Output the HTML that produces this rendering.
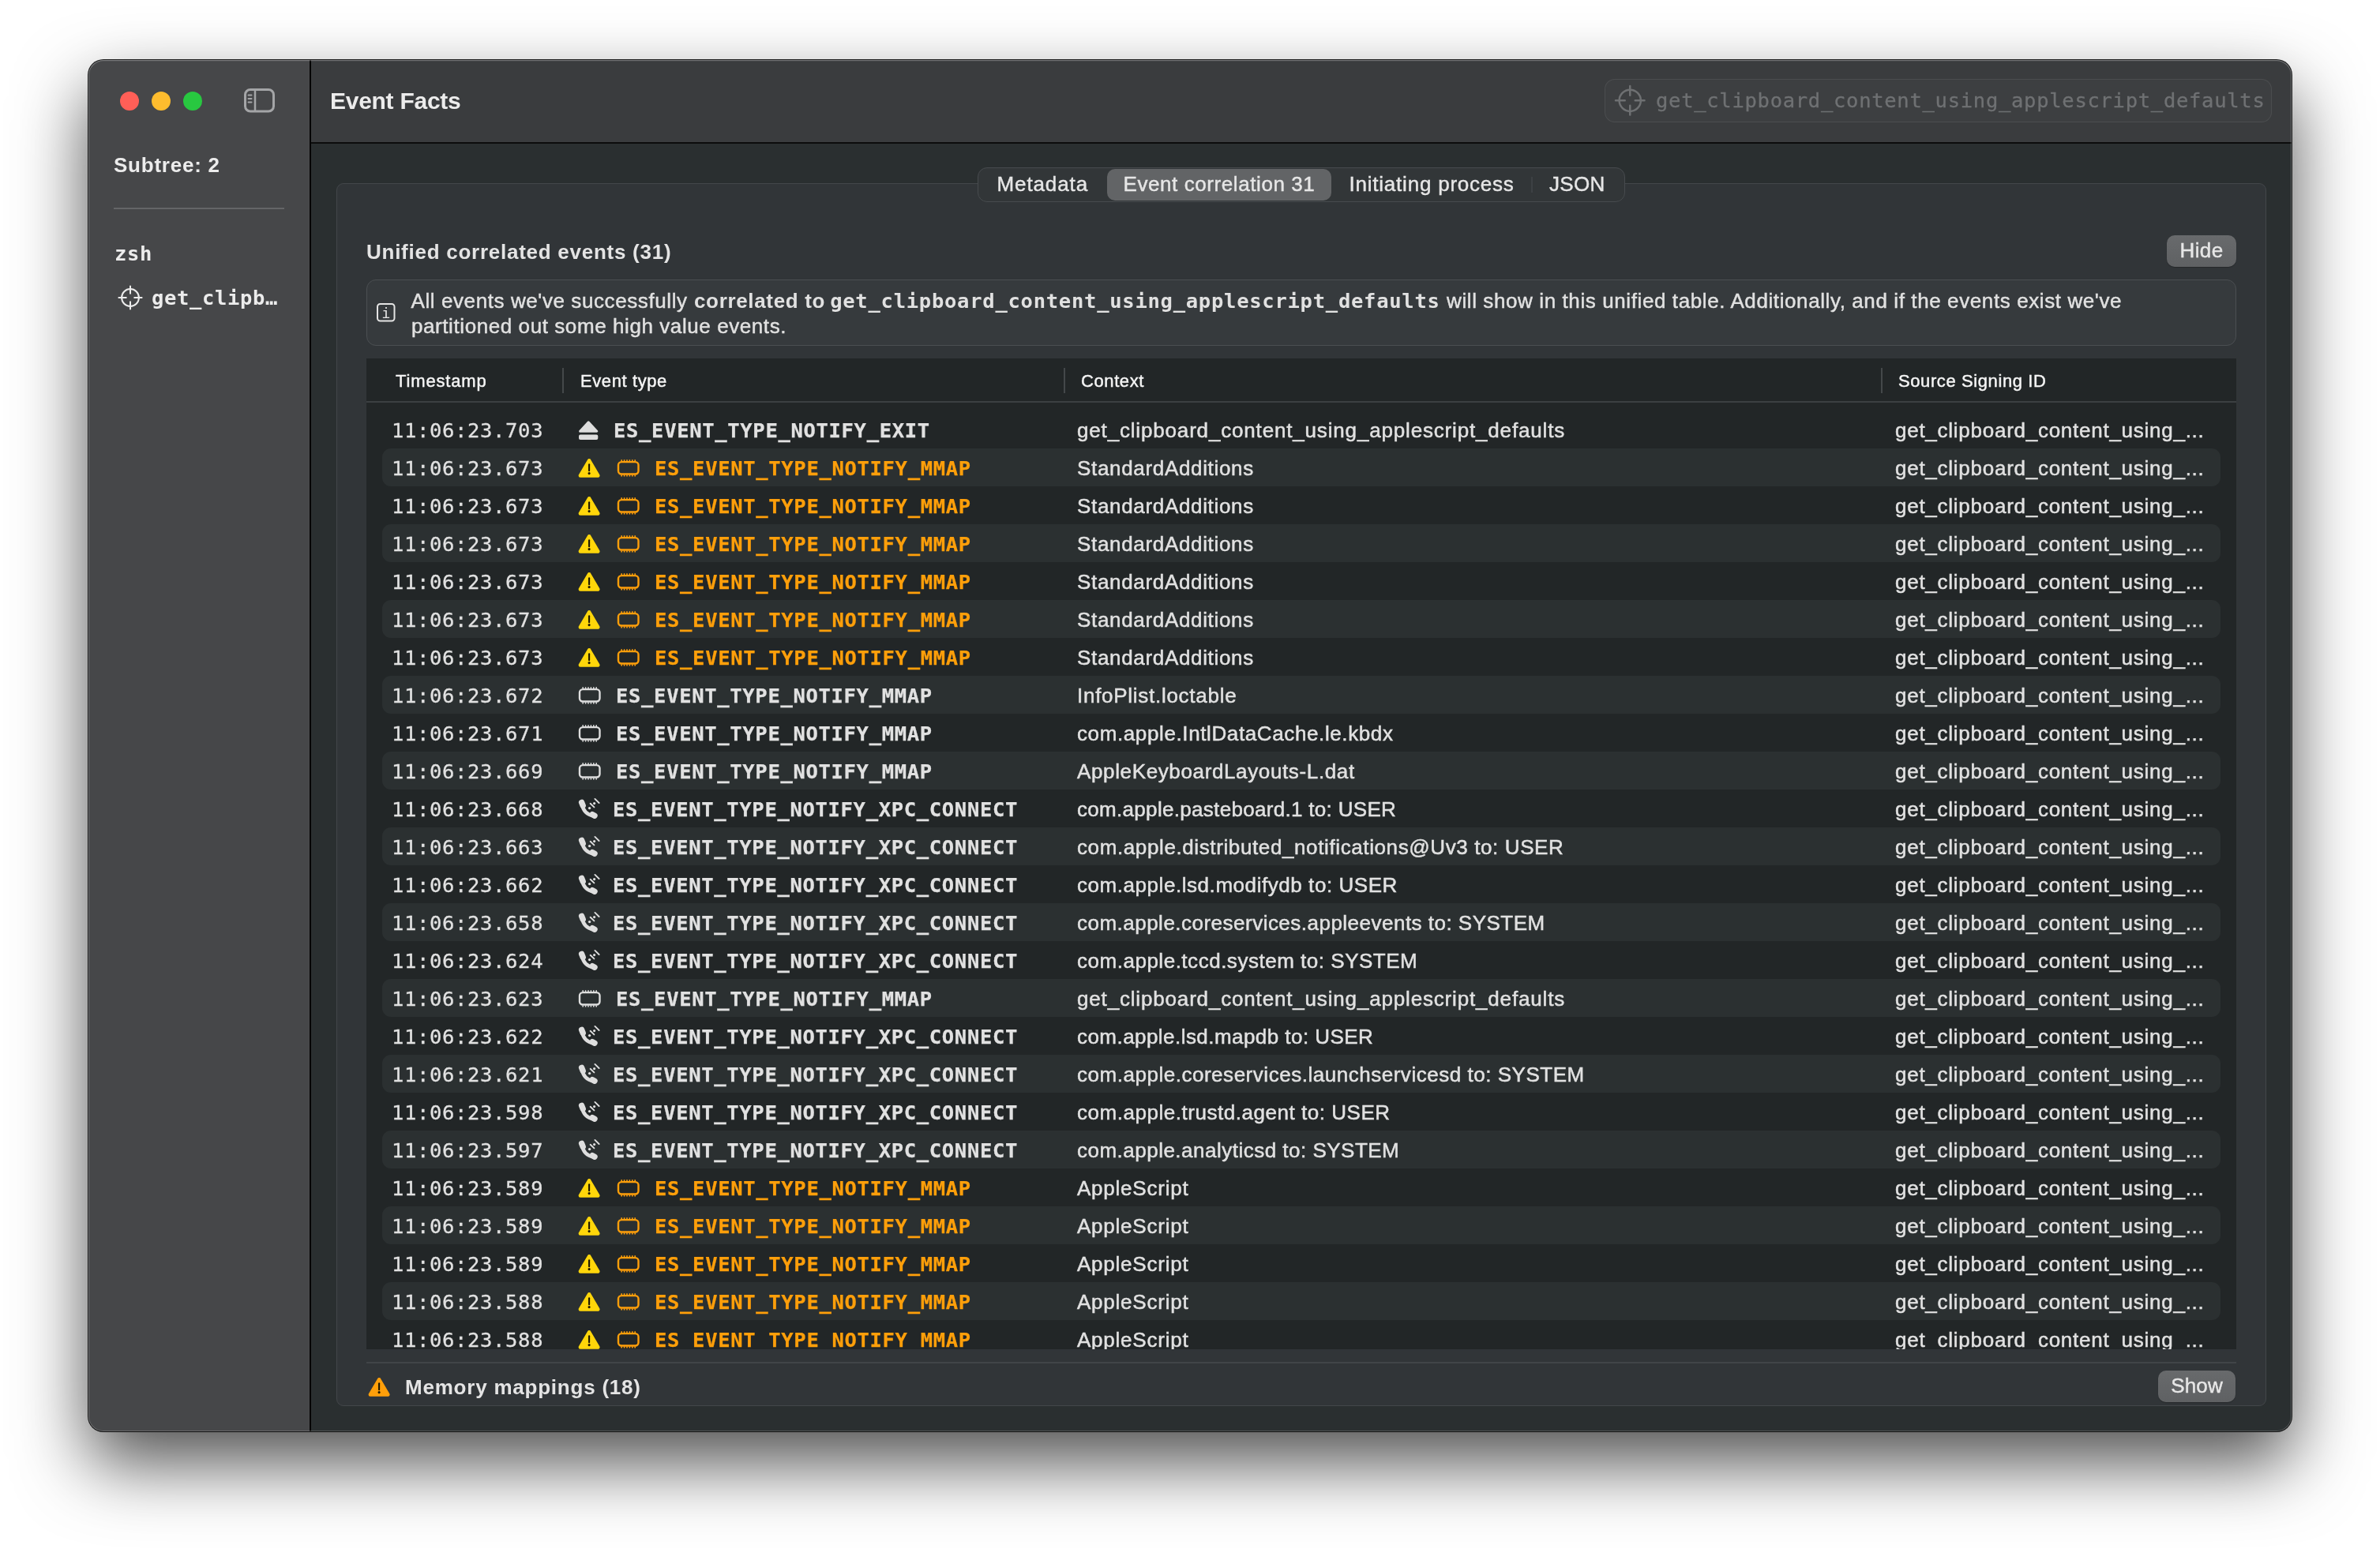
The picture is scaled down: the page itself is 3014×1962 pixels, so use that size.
<!DOCTYPE html>
<html lang="en"><head><meta charset="utf-8"><title>Event Facts</title>
<style>
html,body{margin:0;padding:0;background:#fff;}
body{width:3014px;height:1962px;overflow:hidden;position:relative;font-family:"Liberation Sans",sans-serif;}
#win{position:absolute;left:112px;top:76px;width:2790px;height:1737px;border-radius:19px;overflow:hidden;background:#2a2e30;
 box-shadow:0 0 0 1px rgba(0,0,0,.88),0 40px 90px rgba(0,0,0,.69);}
#win:after{content:"";position:absolute;inset:0;border-radius:19px;box-shadow:inset 0 0 0 1px rgba(255,255,255,.2),inset 0 1px 0 0.5px rgba(255,255,255,.12);pointer-events:none;}
#pg{position:absolute;left:-112px;top:-76px;width:3014px;height:1962px;will-change:transform;}
#pg>*, #seg>*, #table>*, .row>*, #thead>*, #info>*{position:absolute;}
#sidebar{left:111px;top:75px;width:281px;height:1739px;background:#464749;}
#toolbar{left:394px;top:75px;width:2509px;height:105px;background:#3a3c3e;}
#content{left:394px;top:182px;width:2509px;height:1632px;background:#2a2f30;}
#vdiv{left:392px;top:75px;width:2px;height:1739px;background:#050505;}
#hdiv{left:394px;top:180px;width:2509px;height:2px;background:#0c0c0c;}
.tl{top:116px;width:24px;height:24px;border-radius:50%;}
#sbicon{left:308px;top:110.5px;}
.t{white-space:nowrap;color:#e3e3e3;font-size:26px;line-height:32px;}
.b{font-weight:bold;}
.m{font-family:"DejaVu Sans Mono","Liberation Mono",monospace;letter-spacing:.66px;font-size:25.5px;}
#subtree{left:144px;top:193px;color:#ececec;letter-spacing:.77px;}
#sbline{left:144px;top:263px;width:216px;height:2px;background:#646567;}
#zsh{left:145px;top:305px;font-weight:bold;color:#ececec;}
#sbcross{left:147.5px;top:359.5px;color:#ececec;}
#getclip{left:192px;top:361px;font-weight:bold;color:#ececec;}
#title{left:418px;top:110px;font-size:30px;line-height:36px;color:#ececec;letter-spacing:-.27px;}
#tbitem{left:2032px;top:100px;width:845px;height:55px;box-sizing:border-box;border:1px solid rgba(255,255,255,.075);border-radius:13px;background:rgba(255,255,255,.02);}
#tbitem>*{position:absolute;}
#tbitem svg{left:10.4px;top:5px;width:42.5px;height:42.5px;color:#6e7072;}
#tbitem span{left:64px;top:10px;color:#6f7173;-webkit-text-stroke:.3px;letter-spacing:.72px;}
#group{left:426px;top:232px;width:2444px;height:1549px;box-sizing:border-box;border:1px solid #43474a;border-radius:9px;background:#313538;}
#seg{left:1238px;top:212px;width:820px;height:44px;box-sizing:border-box;border:1px solid #474b4e;border-radius:12px;background:#323638;}
#segsel{left:163px;top:1px;width:284px;height:40px;border-radius:10px;background:#626466;}
#seg .t{top:4px;color:#e6e6e6;}
#segsep{left:700px;top:11px;width:2px;height:20px;background:#3d4144;}
#h1{left:464px;top:303px;color:#e4e4e4;letter-spacing:.74px;}
.btn{box-sizing:border-box;height:40px;border-radius:10px;background:linear-gradient(#686a6c,#5f6163);text-align:center;line-height:38px;color:#e6e6e6;box-shadow:0 1px 1px rgba(0,0,0,.25);}
#hide{left:2744px;top:298px;width:88px;}
#show{left:2733px;top:1736px;width:98px;}
#info{left:464px;top:354px;width:2368px;height:84px;box-sizing:border-box;border:1px solid #4b4f52;border-radius:12px;background:#363a3d;}
#infoic{left:10.7px;top:28.4px;}
.it{top:10px;color:#e1e1e1;}
#ia{left:55.5px;}#ib{left:414px;}#ic{left:587px;}#id{left:1367px;}#ie{left:56px;top:42px;}
#table{left:464px;top:454px;width:2368px;height:1255px;background:#222627;overflow:hidden;}
#thead{left:0;top:0;width:2368px;height:54px;border-bottom:2px solid #3c4042;}
.th{top:15px;-webkit-text-stroke:.45px;letter-spacing:.6px;font-size:22px;line-height:28px;color:#f5f5f5;white-space:nowrap;}
.sep{top:12px;width:2px;height:32px;background:#44484a;}
.row{left:20px;width:2328px;height:48px;border-radius:11px;}
.row.alt{background:#2b3031;}
.row span{top:1px;line-height:48px;font-size:26px;white-space:nowrap;color:#e1e1e1;}
.row span.ts{left:12px;font-family:"DejaVu Sans Mono","Liberation Mono",monospace;letter-spacing:.66px;font-size:25.5px;-webkit-text-stroke:.3px;}
.row span.ev{-webkit-text-stroke:.25px;font-family:"DejaVu Sans Mono","Liberation Mono",monospace;letter-spacing:.68px;font-weight:bold;font-size:25.5px;}
.row span.o,.o{color:#ff9f0a;}
.cx{left:880px;letter-spacing:.6px;-webkit-text-stroke:.5px;}
.sg{left:1916px;letter-spacing:.74px;-webkit-text-stroke:.5px;}
.ic{overflow:visible;}
.i-eject{left:248px;top:12px;width:26px;height:26px;color:#dedede;}
.i-chip{left:247.6px;top:13px;width:30px;height:24px;color:#dedede;}
.i-chip.o{color:#ff9f0a;}
.i-phone{left:248px;top:11px;width:28px;height:28px;color:#dedede;}
.i-warn{left:246.7px;top:11px;width:30px;height:28px;color:#ffd60a;}
#botline{left:464px;top:1725px;width:2368px;height:2px;background:#414548;}
#botwarn{left:465px;top:1743px;}
#mm{left:513px;top:1741px;color:#e4e4e4;letter-spacing:.78px;}
#s1{letter-spacing:.89px;}#s2{letter-spacing:.58px;}#s3{letter-spacing:.78px;}#s4{letter-spacing:.3px;}
#hide{letter-spacing:.4px;}#show{letter-spacing:.15px;}
#ia{letter-spacing:.59px;}#ib{letter-spacing:.66px;}#id{letter-spacing:.6px;}#ie{letter-spacing:.58px;}
#seg .t,.btn,.it{-webkit-text-stroke:.45px;}
#ib,#ic{-webkit-text-stroke:0;}
#ic{letter-spacing:.74px;left:586.2px;}

</style></head>
<body>
<div id="win"><div id="pg">
<div id="sidebar"></div>
<div id="toolbar"></div>
<div id="content"></div>
<div id="vdiv"></div><div id="hdiv"></div>

<div class="tl" style="left:152px;background:#ff5f57"></div>
<div class="tl" style="left:192px;background:#febc2e"></div>
<div class="tl" style="left:232px;background:#28c840"></div>
<svg id="sbicon" width="42" height="34" viewBox="0 0 42 34"><rect x="2.5" y="2.5" width="36" height="27.5" rx="6.5" fill="none" stroke="#a4a5a7" stroke-width="3"/><line x1="15" y1="3" x2="15" y2="29.5" stroke="#a4a5a7" stroke-width="2.5"/><g stroke="#a4a5a7" stroke-width="2" stroke-linecap="round"><line x1="6.5" y1="9.6" x2="10.5" y2="9.6"/><line x1="6.5" y1="14.1" x2="10.5" y2="14.1"/><line x1="6.5" y1="18.6" x2="10.5" y2="18.6"/></g></svg>

<div id="subtree" class="t b">Subtree: 2</div>
<div id="sbline"></div>
<div id="zsh" class="t m">zsh</div>
<svg id="sbcross" class="cross" width="34" height="34" viewBox="0 0 34 34"><g fill="none" stroke="currentColor" stroke-width="2" stroke-linecap="round"><circle cx="17" cy="17" r="10.9"/><path d="M17 2.4v9.4M17 22.2v9.4M2.4 17h9.4M22.2 17h9.4"/></g></svg>
<div id="getclip" class="t m">get_clipb…</div>

<div id="title" class="t b">Event Facts</div>
<div id="tbitem"><svg class="cross" width="34" height="34" viewBox="0 0 34 34"><g fill="none" stroke="currentColor" stroke-width="2" stroke-linecap="round"><circle cx="17" cy="17" r="10.9"/><path d="M17 2.4v9.4M17 22.2v9.4M2.4 17h9.4M22.2 17h9.4"/></g></svg><span class="t m">get_clipboard_content_using_applescript_defaults</span></div>

<div id="group"></div>
<div id="seg">
 <div id="segsel"></div>
 <span class="t" style="left:23.5px" id="s1">Metadata</span>
 <span class="t" style="left:183.5px" id="s2">Event correlation 31</span>
 <span class="t" style="left:469.5px" id="s3">Initiating process</span>
 <i id="segsep"></i>
 <span class="t" style="left:723px" id="s4">JSON</span>
</div>

<div id="h1" class="t b">Unified correlated events (31)</div>
<div id="hide" class="btn t">Hide</div>
<div id="info">
 <svg id="infoic" width="28" height="28" viewBox="0 0 28 28"><rect x="2" y="2" width="21.5" height="21.5" rx="3.5" fill="none" stroke="#e4e4e4" stroke-width="2"/><text x="12.75" y="20.1" text-anchor="middle" font-family="DejaVu Sans Mono,Liberation Mono,monospace" font-size="18.5" fill="#e4e4e4">i</text></svg>
 <span id="ia" class="t it">All events we've successfully</span>
 <span id="ib" class="t it b">correlated to</span>
 <span id="ic" class="t it b m">get_clipboard_content_using_applescript_defaults</span>
 <span id="id" class="t it">will show in this unified table. Additionally, and if the events exist we've</span>
 <span id="ie" class="t it">partitioned out some high value events.</span>
</div>

<div id="table">
 <div id="thead">
  <span class="th" style="left:37px;letter-spacing:.85px">Timestamp</span><i class="sep" style="left:248px"></i>
  <span class="th" style="left:271px">Event type</span><i class="sep" style="left:883px"></i>
  <span class="th" style="left:905px">Context</span><i class="sep" style="left:1918px"></i>
  <span class="th" style="left:1940px">Source Signing ID</span>
 </div>
<div class="row" style="top:66px"><span class="ts">11:06:23.703</span><svg class="ic i-eject" viewBox="0 0 26 26"><path d="M13.2 2.9 23.8 14.2H2.6Z" fill="currentColor" stroke="currentColor" stroke-width="3" stroke-linejoin="round"/><rect x="1" y="18.6" width="24.3" height="6.4" rx="2" fill="currentColor"/></svg><span class="ev" style="left:293px">ES_EVENT_TYPE_NOTIFY_EXIT</span><span class="cx" style="letter-spacing:0.83px">get_clipboard_content_using_applescript_defaults</span><span class="sg">get_clipboard_content_using_...</span></div>
<div class="row alt" style="top:114px"><span class="ts">11:06:23.673</span><svg class="ic i-warn" viewBox="0 0 30 28"><path d="M15.1 4.3 26.3 23.5H3.9Z" fill="currentColor" stroke="currentColor" stroke-width="4.6" stroke-linejoin="round"/><path d="M15.1 9.3v7.9" stroke="#1c1600" stroke-width="2.1" stroke-linecap="round" fill="none"/><circle cx="15.1" cy="20.6" r="1.55" fill="#1c1600"/></svg><svg class="ic i-chip o" viewBox="0 0 30 24" style="left:297px"><rect x="2" y="4.1" width="25.5" height="15.4" rx="4" fill="none" stroke="currentColor" stroke-width="2.4"/><path d="M6.2 1.2v2M9.6 1.2v2M13 1.2v2M16.4 1.2v2M19.8 1.2v2M23.2 1.2v2M6.2 20.4v2.2M9.6 20.4v2.2M13 20.4v2.2M16.4 20.4v2.2M19.8 20.4v2.2M23.2 20.4v2.2" stroke="currentColor" stroke-width="1.6" fill="none"/></svg><span class="ev o" style="left:345px">ES_EVENT_TYPE_NOTIFY_MMAP</span><span class="cx" style="letter-spacing:0.669px">StandardAdditions</span><span class="sg">get_clipboard_content_using_...</span></div>
<div class="row" style="top:162px"><span class="ts">11:06:23.673</span><svg class="ic i-warn" viewBox="0 0 30 28"><path d="M15.1 4.3 26.3 23.5H3.9Z" fill="currentColor" stroke="currentColor" stroke-width="4.6" stroke-linejoin="round"/><path d="M15.1 9.3v7.9" stroke="#1c1600" stroke-width="2.1" stroke-linecap="round" fill="none"/><circle cx="15.1" cy="20.6" r="1.55" fill="#1c1600"/></svg><svg class="ic i-chip o" viewBox="0 0 30 24" style="left:297px"><rect x="2" y="4.1" width="25.5" height="15.4" rx="4" fill="none" stroke="currentColor" stroke-width="2.4"/><path d="M6.2 1.2v2M9.6 1.2v2M13 1.2v2M16.4 1.2v2M19.8 1.2v2M23.2 1.2v2M6.2 20.4v2.2M9.6 20.4v2.2M13 20.4v2.2M16.4 20.4v2.2M19.8 20.4v2.2M23.2 20.4v2.2" stroke="currentColor" stroke-width="1.6" fill="none"/></svg><span class="ev o" style="left:345px">ES_EVENT_TYPE_NOTIFY_MMAP</span><span class="cx" style="letter-spacing:0.669px">StandardAdditions</span><span class="sg">get_clipboard_content_using_...</span></div>
<div class="row alt" style="top:210px"><span class="ts">11:06:23.673</span><svg class="ic i-warn" viewBox="0 0 30 28"><path d="M15.1 4.3 26.3 23.5H3.9Z" fill="currentColor" stroke="currentColor" stroke-width="4.6" stroke-linejoin="round"/><path d="M15.1 9.3v7.9" stroke="#1c1600" stroke-width="2.1" stroke-linecap="round" fill="none"/><circle cx="15.1" cy="20.6" r="1.55" fill="#1c1600"/></svg><svg class="ic i-chip o" viewBox="0 0 30 24" style="left:297px"><rect x="2" y="4.1" width="25.5" height="15.4" rx="4" fill="none" stroke="currentColor" stroke-width="2.4"/><path d="M6.2 1.2v2M9.6 1.2v2M13 1.2v2M16.4 1.2v2M19.8 1.2v2M23.2 1.2v2M6.2 20.4v2.2M9.6 20.4v2.2M13 20.4v2.2M16.4 20.4v2.2M19.8 20.4v2.2M23.2 20.4v2.2" stroke="currentColor" stroke-width="1.6" fill="none"/></svg><span class="ev o" style="left:345px">ES_EVENT_TYPE_NOTIFY_MMAP</span><span class="cx" style="letter-spacing:0.669px">StandardAdditions</span><span class="sg">get_clipboard_content_using_...</span></div>
<div class="row" style="top:258px"><span class="ts">11:06:23.673</span><svg class="ic i-warn" viewBox="0 0 30 28"><path d="M15.1 4.3 26.3 23.5H3.9Z" fill="currentColor" stroke="currentColor" stroke-width="4.6" stroke-linejoin="round"/><path d="M15.1 9.3v7.9" stroke="#1c1600" stroke-width="2.1" stroke-linecap="round" fill="none"/><circle cx="15.1" cy="20.6" r="1.55" fill="#1c1600"/></svg><svg class="ic i-chip o" viewBox="0 0 30 24" style="left:297px"><rect x="2" y="4.1" width="25.5" height="15.4" rx="4" fill="none" stroke="currentColor" stroke-width="2.4"/><path d="M6.2 1.2v2M9.6 1.2v2M13 1.2v2M16.4 1.2v2M19.8 1.2v2M23.2 1.2v2M6.2 20.4v2.2M9.6 20.4v2.2M13 20.4v2.2M16.4 20.4v2.2M19.8 20.4v2.2M23.2 20.4v2.2" stroke="currentColor" stroke-width="1.6" fill="none"/></svg><span class="ev o" style="left:345px">ES_EVENT_TYPE_NOTIFY_MMAP</span><span class="cx" style="letter-spacing:0.669px">StandardAdditions</span><span class="sg">get_clipboard_content_using_...</span></div>
<div class="row alt" style="top:306px"><span class="ts">11:06:23.673</span><svg class="ic i-warn" viewBox="0 0 30 28"><path d="M15.1 4.3 26.3 23.5H3.9Z" fill="currentColor" stroke="currentColor" stroke-width="4.6" stroke-linejoin="round"/><path d="M15.1 9.3v7.9" stroke="#1c1600" stroke-width="2.1" stroke-linecap="round" fill="none"/><circle cx="15.1" cy="20.6" r="1.55" fill="#1c1600"/></svg><svg class="ic i-chip o" viewBox="0 0 30 24" style="left:297px"><rect x="2" y="4.1" width="25.5" height="15.4" rx="4" fill="none" stroke="currentColor" stroke-width="2.4"/><path d="M6.2 1.2v2M9.6 1.2v2M13 1.2v2M16.4 1.2v2M19.8 1.2v2M23.2 1.2v2M6.2 20.4v2.2M9.6 20.4v2.2M13 20.4v2.2M16.4 20.4v2.2M19.8 20.4v2.2M23.2 20.4v2.2" stroke="currentColor" stroke-width="1.6" fill="none"/></svg><span class="ev o" style="left:345px">ES_EVENT_TYPE_NOTIFY_MMAP</span><span class="cx" style="letter-spacing:0.669px">StandardAdditions</span><span class="sg">get_clipboard_content_using_...</span></div>
<div class="row" style="top:354px"><span class="ts">11:06:23.673</span><svg class="ic i-warn" viewBox="0 0 30 28"><path d="M15.1 4.3 26.3 23.5H3.9Z" fill="currentColor" stroke="currentColor" stroke-width="4.6" stroke-linejoin="round"/><path d="M15.1 9.3v7.9" stroke="#1c1600" stroke-width="2.1" stroke-linecap="round" fill="none"/><circle cx="15.1" cy="20.6" r="1.55" fill="#1c1600"/></svg><svg class="ic i-chip o" viewBox="0 0 30 24" style="left:297px"><rect x="2" y="4.1" width="25.5" height="15.4" rx="4" fill="none" stroke="currentColor" stroke-width="2.4"/><path d="M6.2 1.2v2M9.6 1.2v2M13 1.2v2M16.4 1.2v2M19.8 1.2v2M23.2 1.2v2M6.2 20.4v2.2M9.6 20.4v2.2M13 20.4v2.2M16.4 20.4v2.2M19.8 20.4v2.2M23.2 20.4v2.2" stroke="currentColor" stroke-width="1.6" fill="none"/></svg><span class="ev o" style="left:345px">ES_EVENT_TYPE_NOTIFY_MMAP</span><span class="cx" style="letter-spacing:0.669px">StandardAdditions</span><span class="sg">get_clipboard_content_using_...</span></div>
<div class="row alt" style="top:402px"><span class="ts">11:06:23.672</span><svg class="ic i-chip" viewBox="0 0 30 24"><rect x="2" y="4.1" width="25.5" height="15.4" rx="4" fill="none" stroke="currentColor" stroke-width="2.4"/><path d="M6.2 1.2v2M9.6 1.2v2M13 1.2v2M16.4 1.2v2M19.8 1.2v2M23.2 1.2v2M6.2 20.4v2.2M9.6 20.4v2.2M13 20.4v2.2M16.4 20.4v2.2M19.8 20.4v2.2M23.2 20.4v2.2" stroke="currentColor" stroke-width="1.6" fill="none"/></svg><span class="ev" style="left:296px">ES_EVENT_TYPE_NOTIFY_MMAP</span><span class="cx" style="letter-spacing:0.723px">InfoPlist.loctable</span><span class="sg">get_clipboard_content_using_...</span></div>
<div class="row" style="top:450px"><span class="ts">11:06:23.671</span><svg class="ic i-chip" viewBox="0 0 30 24"><rect x="2" y="4.1" width="25.5" height="15.4" rx="4" fill="none" stroke="currentColor" stroke-width="2.4"/><path d="M6.2 1.2v2M9.6 1.2v2M13 1.2v2M16.4 1.2v2M19.8 1.2v2M23.2 1.2v2M6.2 20.4v2.2M9.6 20.4v2.2M13 20.4v2.2M16.4 20.4v2.2M19.8 20.4v2.2M23.2 20.4v2.2" stroke="currentColor" stroke-width="1.6" fill="none"/></svg><span class="ev" style="left:296px">ES_EVENT_TYPE_NOTIFY_MMAP</span><span class="cx" style="letter-spacing:0.613px">com.apple.IntlDataCache.le.kbdx</span><span class="sg">get_clipboard_content_using_...</span></div>
<div class="row alt" style="top:498px"><span class="ts">11:06:23.669</span><svg class="ic i-chip" viewBox="0 0 30 24"><rect x="2" y="4.1" width="25.5" height="15.4" rx="4" fill="none" stroke="currentColor" stroke-width="2.4"/><path d="M6.2 1.2v2M9.6 1.2v2M13 1.2v2M16.4 1.2v2M19.8 1.2v2M23.2 1.2v2M6.2 20.4v2.2M9.6 20.4v2.2M13 20.4v2.2M16.4 20.4v2.2M19.8 20.4v2.2M23.2 20.4v2.2" stroke="currentColor" stroke-width="1.6" fill="none"/></svg><span class="ev" style="left:296px">ES_EVENT_TYPE_NOTIFY_MMAP</span><span class="cx" style="letter-spacing:0.632px">AppleKeyboardLayouts-L.dat</span><span class="sg">get_clipboard_content_using_...</span></div>
<div class="row" style="top:546px"><span class="ts">11:06:23.668</span><svg class="ic i-phone" viewBox="0 0 28 28"><g fill="none" stroke="currentColor" stroke-linecap="round"><path d="M5 7.5Q7 20 19.5 22.5" stroke-width="4.6"/><path d="M4.6 5.4 6.2 9.4" stroke-width="7.4"/><path d="M18.2 20.6 21 22.2" stroke-width="7.4"/><path d="M15.6 6.8 20.4 11.4M21.4 .9 26.6 6" stroke-width="1.9"/></g><circle cx="14.6" cy="12.6" r="1.7" fill="currentColor"/><circle cx="20.6" cy="6.6" r="1.6" fill="currentColor"/></svg><span class="ev" style="left:292px">ES_EVENT_TYPE_NOTIFY_XPC_CONNECT</span><span class="cx" style="letter-spacing:0.309px">com.apple.pasteboard.1 to: USER</span><span class="sg">get_clipboard_content_using_...</span></div>
<div class="row alt" style="top:594px"><span class="ts">11:06:23.663</span><svg class="ic i-phone" viewBox="0 0 28 28"><g fill="none" stroke="currentColor" stroke-linecap="round"><path d="M5 7.5Q7 20 19.5 22.5" stroke-width="4.6"/><path d="M4.6 5.4 6.2 9.4" stroke-width="7.4"/><path d="M18.2 20.6 21 22.2" stroke-width="7.4"/><path d="M15.6 6.8 20.4 11.4M21.4 .9 26.6 6" stroke-width="1.9"/></g><circle cx="14.6" cy="12.6" r="1.7" fill="currentColor"/><circle cx="20.6" cy="6.6" r="1.6" fill="currentColor"/></svg><span class="ev" style="left:292px">ES_EVENT_TYPE_NOTIFY_XPC_CONNECT</span><span class="cx" style="letter-spacing:0.611px">com.apple.distributed_notifications@Uv3 to: USER</span><span class="sg">get_clipboard_content_using_...</span></div>
<div class="row" style="top:642px"><span class="ts">11:06:23.662</span><svg class="ic i-phone" viewBox="0 0 28 28"><g fill="none" stroke="currentColor" stroke-linecap="round"><path d="M5 7.5Q7 20 19.5 22.5" stroke-width="4.6"/><path d="M4.6 5.4 6.2 9.4" stroke-width="7.4"/><path d="M18.2 20.6 21 22.2" stroke-width="7.4"/><path d="M15.6 6.8 20.4 11.4M21.4 .9 26.6 6" stroke-width="1.9"/></g><circle cx="14.6" cy="12.6" r="1.7" fill="currentColor"/><circle cx="20.6" cy="6.6" r="1.6" fill="currentColor"/></svg><span class="ev" style="left:292px">ES_EVENT_TYPE_NOTIFY_XPC_CONNECT</span><span class="cx" style="letter-spacing:0.554px">com.apple.lsd.modifydb to: USER</span><span class="sg">get_clipboard_content_using_...</span></div>
<div class="row alt" style="top:690px"><span class="ts">11:06:23.658</span><svg class="ic i-phone" viewBox="0 0 28 28"><g fill="none" stroke="currentColor" stroke-linecap="round"><path d="M5 7.5Q7 20 19.5 22.5" stroke-width="4.6"/><path d="M4.6 5.4 6.2 9.4" stroke-width="7.4"/><path d="M18.2 20.6 21 22.2" stroke-width="7.4"/><path d="M15.6 6.8 20.4 11.4M21.4 .9 26.6 6" stroke-width="1.9"/></g><circle cx="14.6" cy="12.6" r="1.7" fill="currentColor"/><circle cx="20.6" cy="6.6" r="1.6" fill="currentColor"/></svg><span class="ev" style="left:292px">ES_EVENT_TYPE_NOTIFY_XPC_CONNECT</span><span class="cx" style="letter-spacing:0.486px">com.apple.coreservices.appleevents to: SYSTEM</span><span class="sg">get_clipboard_content_using_...</span></div>
<div class="row" style="top:738px"><span class="ts">11:06:23.624</span><svg class="ic i-phone" viewBox="0 0 28 28"><g fill="none" stroke="currentColor" stroke-linecap="round"><path d="M5 7.5Q7 20 19.5 22.5" stroke-width="4.6"/><path d="M4.6 5.4 6.2 9.4" stroke-width="7.4"/><path d="M18.2 20.6 21 22.2" stroke-width="7.4"/><path d="M15.6 6.8 20.4 11.4M21.4 .9 26.6 6" stroke-width="1.9"/></g><circle cx="14.6" cy="12.6" r="1.7" fill="currentColor"/><circle cx="20.6" cy="6.6" r="1.6" fill="currentColor"/></svg><span class="ev" style="left:292px">ES_EVENT_TYPE_NOTIFY_XPC_CONNECT</span><span class="cx" style="letter-spacing:0.519px">com.apple.tccd.system to: SYSTEM</span><span class="sg">get_clipboard_content_using_...</span></div>
<div class="row alt" style="top:786px"><span class="ts">11:06:23.623</span><svg class="ic i-chip" viewBox="0 0 30 24"><rect x="2" y="4.1" width="25.5" height="15.4" rx="4" fill="none" stroke="currentColor" stroke-width="2.4"/><path d="M6.2 1.2v2M9.6 1.2v2M13 1.2v2M16.4 1.2v2M19.8 1.2v2M23.2 1.2v2M6.2 20.4v2.2M9.6 20.4v2.2M13 20.4v2.2M16.4 20.4v2.2M19.8 20.4v2.2M23.2 20.4v2.2" stroke="currentColor" stroke-width="1.6" fill="none"/></svg><span class="ev" style="left:296px">ES_EVENT_TYPE_NOTIFY_MMAP</span><span class="cx" style="letter-spacing:0.83px">get_clipboard_content_using_applescript_defaults</span><span class="sg">get_clipboard_content_using_...</span></div>
<div class="row" style="top:834px"><span class="ts">11:06:23.622</span><svg class="ic i-phone" viewBox="0 0 28 28"><g fill="none" stroke="currentColor" stroke-linecap="round"><path d="M5 7.5Q7 20 19.5 22.5" stroke-width="4.6"/><path d="M4.6 5.4 6.2 9.4" stroke-width="7.4"/><path d="M18.2 20.6 21 22.2" stroke-width="7.4"/><path d="M15.6 6.8 20.4 11.4M21.4 .9 26.6 6" stroke-width="1.9"/></g><circle cx="14.6" cy="12.6" r="1.7" fill="currentColor"/><circle cx="20.6" cy="6.6" r="1.6" fill="currentColor"/></svg><span class="ev" style="left:292px">ES_EVENT_TYPE_NOTIFY_XPC_CONNECT</span><span class="cx" style="letter-spacing:0.448px">com.apple.lsd.mapdb to: USER</span><span class="sg">get_clipboard_content_using_...</span></div>
<div class="row alt" style="top:882px"><span class="ts">11:06:23.621</span><svg class="ic i-phone" viewBox="0 0 28 28"><g fill="none" stroke="currentColor" stroke-linecap="round"><path d="M5 7.5Q7 20 19.5 22.5" stroke-width="4.6"/><path d="M4.6 5.4 6.2 9.4" stroke-width="7.4"/><path d="M18.2 20.6 21 22.2" stroke-width="7.4"/><path d="M15.6 6.8 20.4 11.4M21.4 .9 26.6 6" stroke-width="1.9"/></g><circle cx="14.6" cy="12.6" r="1.7" fill="currentColor"/><circle cx="20.6" cy="6.6" r="1.6" fill="currentColor"/></svg><span class="ev" style="left:292px">ES_EVENT_TYPE_NOTIFY_XPC_CONNECT</span><span class="cx" style="letter-spacing:0.525px">com.apple.coreservices.launchservicesd to: SYSTEM</span><span class="sg">get_clipboard_content_using_...</span></div>
<div class="row" style="top:930px"><span class="ts">11:06:23.598</span><svg class="ic i-phone" viewBox="0 0 28 28"><g fill="none" stroke="currentColor" stroke-linecap="round"><path d="M5 7.5Q7 20 19.5 22.5" stroke-width="4.6"/><path d="M4.6 5.4 6.2 9.4" stroke-width="7.4"/><path d="M18.2 20.6 21 22.2" stroke-width="7.4"/><path d="M15.6 6.8 20.4 11.4M21.4 .9 26.6 6" stroke-width="1.9"/></g><circle cx="14.6" cy="12.6" r="1.7" fill="currentColor"/><circle cx="20.6" cy="6.6" r="1.6" fill="currentColor"/></svg><span class="ev" style="left:292px">ES_EVENT_TYPE_NOTIFY_XPC_CONNECT</span><span class="cx" style="letter-spacing:0.533px">com.apple.trustd.agent to: USER</span><span class="sg">get_clipboard_content_using_...</span></div>
<div class="row alt" style="top:978px"><span class="ts">11:06:23.597</span><svg class="ic i-phone" viewBox="0 0 28 28"><g fill="none" stroke="currentColor" stroke-linecap="round"><path d="M5 7.5Q7 20 19.5 22.5" stroke-width="4.6"/><path d="M4.6 5.4 6.2 9.4" stroke-width="7.4"/><path d="M18.2 20.6 21 22.2" stroke-width="7.4"/><path d="M15.6 6.8 20.4 11.4M21.4 .9 26.6 6" stroke-width="1.9"/></g><circle cx="14.6" cy="12.6" r="1.7" fill="currentColor"/><circle cx="20.6" cy="6.6" r="1.6" fill="currentColor"/></svg><span class="ev" style="left:292px">ES_EVENT_TYPE_NOTIFY_XPC_CONNECT</span><span class="cx" style="letter-spacing:0.49px">com.apple.analyticsd to: SYSTEM</span><span class="sg">get_clipboard_content_using_...</span></div>
<div class="row" style="top:1026px"><span class="ts">11:06:23.589</span><svg class="ic i-warn" viewBox="0 0 30 28"><path d="M15.1 4.3 26.3 23.5H3.9Z" fill="currentColor" stroke="currentColor" stroke-width="4.6" stroke-linejoin="round"/><path d="M15.1 9.3v7.9" stroke="#1c1600" stroke-width="2.1" stroke-linecap="round" fill="none"/><circle cx="15.1" cy="20.6" r="1.55" fill="#1c1600"/></svg><svg class="ic i-chip o" viewBox="0 0 30 24" style="left:297px"><rect x="2" y="4.1" width="25.5" height="15.4" rx="4" fill="none" stroke="currentColor" stroke-width="2.4"/><path d="M6.2 1.2v2M9.6 1.2v2M13 1.2v2M16.4 1.2v2M19.8 1.2v2M23.2 1.2v2M6.2 20.4v2.2M9.6 20.4v2.2M13 20.4v2.2M16.4 20.4v2.2M19.8 20.4v2.2M23.2 20.4v2.2" stroke="currentColor" stroke-width="1.6" fill="none"/></svg><span class="ev o" style="left:345px">ES_EVENT_TYPE_NOTIFY_MMAP</span><span class="cx" style="letter-spacing:0.77px">AppleScript</span><span class="sg">get_clipboard_content_using_...</span></div>
<div class="row alt" style="top:1074px"><span class="ts">11:06:23.589</span><svg class="ic i-warn" viewBox="0 0 30 28"><path d="M15.1 4.3 26.3 23.5H3.9Z" fill="currentColor" stroke="currentColor" stroke-width="4.6" stroke-linejoin="round"/><path d="M15.1 9.3v7.9" stroke="#1c1600" stroke-width="2.1" stroke-linecap="round" fill="none"/><circle cx="15.1" cy="20.6" r="1.55" fill="#1c1600"/></svg><svg class="ic i-chip o" viewBox="0 0 30 24" style="left:297px"><rect x="2" y="4.1" width="25.5" height="15.4" rx="4" fill="none" stroke="currentColor" stroke-width="2.4"/><path d="M6.2 1.2v2M9.6 1.2v2M13 1.2v2M16.4 1.2v2M19.8 1.2v2M23.2 1.2v2M6.2 20.4v2.2M9.6 20.4v2.2M13 20.4v2.2M16.4 20.4v2.2M19.8 20.4v2.2M23.2 20.4v2.2" stroke="currentColor" stroke-width="1.6" fill="none"/></svg><span class="ev o" style="left:345px">ES_EVENT_TYPE_NOTIFY_MMAP</span><span class="cx" style="letter-spacing:0.77px">AppleScript</span><span class="sg">get_clipboard_content_using_...</span></div>
<div class="row" style="top:1122px"><span class="ts">11:06:23.589</span><svg class="ic i-warn" viewBox="0 0 30 28"><path d="M15.1 4.3 26.3 23.5H3.9Z" fill="currentColor" stroke="currentColor" stroke-width="4.6" stroke-linejoin="round"/><path d="M15.1 9.3v7.9" stroke="#1c1600" stroke-width="2.1" stroke-linecap="round" fill="none"/><circle cx="15.1" cy="20.6" r="1.55" fill="#1c1600"/></svg><svg class="ic i-chip o" viewBox="0 0 30 24" style="left:297px"><rect x="2" y="4.1" width="25.5" height="15.4" rx="4" fill="none" stroke="currentColor" stroke-width="2.4"/><path d="M6.2 1.2v2M9.6 1.2v2M13 1.2v2M16.4 1.2v2M19.8 1.2v2M23.2 1.2v2M6.2 20.4v2.2M9.6 20.4v2.2M13 20.4v2.2M16.4 20.4v2.2M19.8 20.4v2.2M23.2 20.4v2.2" stroke="currentColor" stroke-width="1.6" fill="none"/></svg><span class="ev o" style="left:345px">ES_EVENT_TYPE_NOTIFY_MMAP</span><span class="cx" style="letter-spacing:0.77px">AppleScript</span><span class="sg">get_clipboard_content_using_...</span></div>
<div class="row alt" style="top:1170px"><span class="ts">11:06:23.588</span><svg class="ic i-warn" viewBox="0 0 30 28"><path d="M15.1 4.3 26.3 23.5H3.9Z" fill="currentColor" stroke="currentColor" stroke-width="4.6" stroke-linejoin="round"/><path d="M15.1 9.3v7.9" stroke="#1c1600" stroke-width="2.1" stroke-linecap="round" fill="none"/><circle cx="15.1" cy="20.6" r="1.55" fill="#1c1600"/></svg><svg class="ic i-chip o" viewBox="0 0 30 24" style="left:297px"><rect x="2" y="4.1" width="25.5" height="15.4" rx="4" fill="none" stroke="currentColor" stroke-width="2.4"/><path d="M6.2 1.2v2M9.6 1.2v2M13 1.2v2M16.4 1.2v2M19.8 1.2v2M23.2 1.2v2M6.2 20.4v2.2M9.6 20.4v2.2M13 20.4v2.2M16.4 20.4v2.2M19.8 20.4v2.2M23.2 20.4v2.2" stroke="currentColor" stroke-width="1.6" fill="none"/></svg><span class="ev o" style="left:345px">ES_EVENT_TYPE_NOTIFY_MMAP</span><span class="cx" style="letter-spacing:0.77px">AppleScript</span><span class="sg">get_clipboard_content_using_...</span></div>
<div class="row" style="top:1218px"><span class="ts">11:06:23.588</span><svg class="ic i-warn" viewBox="0 0 30 28"><path d="M15.1 4.3 26.3 23.5H3.9Z" fill="currentColor" stroke="currentColor" stroke-width="4.6" stroke-linejoin="round"/><path d="M15.1 9.3v7.9" stroke="#1c1600" stroke-width="2.1" stroke-linecap="round" fill="none"/><circle cx="15.1" cy="20.6" r="1.55" fill="#1c1600"/></svg><svg class="ic i-chip o" viewBox="0 0 30 24" style="left:297px"><rect x="2" y="4.1" width="25.5" height="15.4" rx="4" fill="none" stroke="currentColor" stroke-width="2.4"/><path d="M6.2 1.2v2M9.6 1.2v2M13 1.2v2M16.4 1.2v2M19.8 1.2v2M23.2 1.2v2M6.2 20.4v2.2M9.6 20.4v2.2M13 20.4v2.2M16.4 20.4v2.2M19.8 20.4v2.2M23.2 20.4v2.2" stroke="currentColor" stroke-width="1.6" fill="none"/></svg><span class="ev o" style="left:345px">ES_EVENT_TYPE_NOTIFY_MMAP</span><span class="cx" style="letter-spacing:0.77px">AppleScript</span><span class="sg">get_clipboard_content_using_...</span></div>
</div>

<div id="botline"></div>
<svg id="botwarn" class="ic" width="30" height="28" viewBox="0 0 30 28" style="color:#ff9f0a"><path d="M15.1 4.3 26.3 23.5H3.9Z" fill="currentColor" stroke="currentColor" stroke-width="4.6" stroke-linejoin="round"/><path d="M15.1 9.3v7.9" stroke="#1c1600" stroke-width="2.1" stroke-linecap="round" fill="none"/><circle cx="15.1" cy="20.6" r="1.55" fill="#1c1600"/></svg>
<div id="mm" class="t b">Memory mappings (18)</div>
<div id="show" class="btn t">Show</div>
</div></div>
</body></html>
